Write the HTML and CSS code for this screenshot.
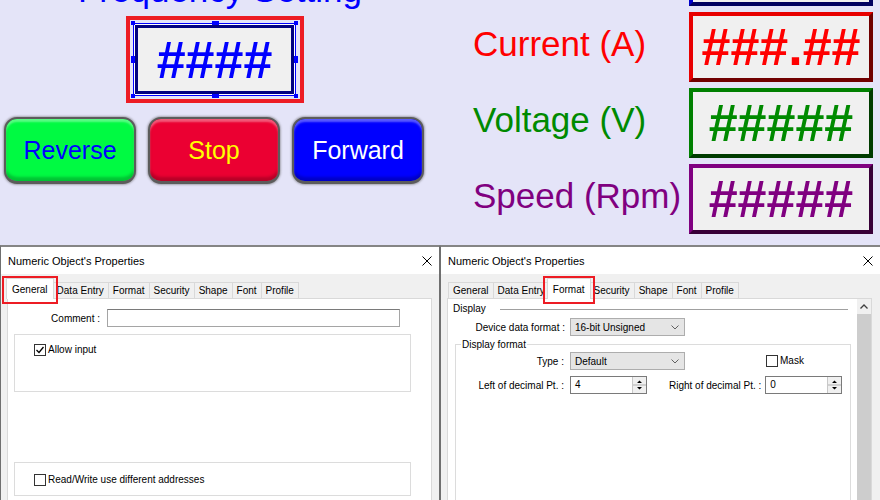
FILE: index.html
```html
<!DOCTYPE html>
<html>
<head>
<meta charset="utf-8">
<title>Numeric Object's Properties</title>
<link rel="stylesheet" href="styles.css">
</head>
<body>

<!-- HMI screen in the editor -->
<div class="screen">
	<div class="screen-left">
		<div class="freq-title">Frequency Setting</div>
		<div class="sel-frame">
			<div class="num-field">####
				<span class="handle tl"></span>
				<span class="handle tm"></span>
				<span class="handle tr"></span>
				<span class="handle ml"></span>
				<span class="handle mr"></span>
				<span class="handle bl"></span>
				<span class="handle bm"></span>
				<span class="handle br"></span>
			</div>
		</div>
		<div class="btn-row">
			<div class="hmi-btn btn-reverse">Reverse</div>
			<div class="hmi-btn btn-stop">Stop</div>
			<div class="hmi-btn btn-forward">Forward</div>
		</div>
	</div>

	<div class="screen-right">
		<div class="meter-row">
			<span class="meter-label"></span>
			<div class="meter meter-blue"></div>
		</div>
		<div class="meter-row">
			<span class="meter-label txt-red">Current (A)</span>
			<div class="meter meter-red">###.##</div>
		</div>
		<div class="meter-row">
			<span class="meter-label txt-green">Voltage (V)</span>
			<div class="meter meter-green">#####</div>
		</div>
		<div class="meter-row">
			<span class="meter-label txt-purple">Speed (Rpm)</span>
			<div class="meter meter-purple">#####</div>
		</div>
	</div>
</div>

<!-- property dialogs -->
<div class="dialogs">

	<div class="dialog">
		<div class="dlg-title">
			<span>Numeric Object's Properties</span>
			<svg class="dlg-close" width="10" height="10" viewBox="0 0 10 10"><path d="M0.5 0.5L9.5 9.5M9.5 0.5L0.5 9.5" stroke="#000" stroke-width="1"/></svg>
		</div>
		<div class="tabs">
			<div class="tab active">General<span class="tab-mark"></span></div>
			<div class="tab">Data Entry</div>
			<div class="tab">Format</div>
			<div class="tab">Security</div>
			<div class="tab">Shape</div>
			<div class="tab">Font</div>
			<div class="tab">Profile</div>
		</div>
		<div class="tab-page">
			<div class="field-row comment-row">
				<span class="lbl lbl-comment">Comment :</span>
				<div class="textbox comment-box"></div>
			</div>
			<div class="group group-input">
				<div class="check">
					<span class="cbox"><svg width="10" height="10" viewBox="0 0 10 10"><path d="M1.5 5L4 7.5L8.5 2" fill="none" stroke="#000" stroke-width="1.3"/></svg></span>
					Allow input
				</div>
			</div>
			<div class="group group-addr">
				<div class="check"><span class="cbox"></span>Read/Write use different addresses</div>
			</div>
		</div>
	</div>

	<div class="dialog dialog-right">
		<div class="dlg-title">
			<span>Numeric Object's Properties</span>
			<svg class="dlg-close" width="10" height="10" viewBox="0 0 10 10"><path d="M0.5 0.5L9.5 9.5M9.5 0.5L0.5 9.5" stroke="#000" stroke-width="1"/></svg>
		</div>
		<div class="tabs">
			<div class="tab">General</div>
			<div class="tab">Data Entry</div>
			<div class="tab active">Format<span class="tab-mark"></span></div>
			<div class="tab">Security</div>
			<div class="tab">Shape</div>
			<div class="tab">Font</div>
			<div class="tab">Profile</div>
		</div>
		<div class="tab-page scroll-page">
			<div class="page-content">
				<div class="sep-row">
					<span class="sep-title">Display</span>
					<span class="sep-line"></span>
				</div>
				<div class="field-row device-row">
					<span class="lbl lbl-device">Device data format :</span>
					<div class="select">16-bit Unsigned
						<svg width="8" height="5" viewBox="0 0 8 5"><path d="M0.5 0.5L4 4L7.5 0.5" fill="none" stroke="#606060" stroke-width="1"/></svg>
					</div>
				</div>
				<div class="group group-format">
					<div class="legend">Display format</div>
					<div class="field-row type-row">
						<span class="lbl lbl-fmt">Type :</span>
						<div class="select">Default
							<svg width="8" height="5" viewBox="0 0 8 5"><path d="M0.5 0.5L4 4L7.5 0.5" fill="none" stroke="#606060" stroke-width="1"/></svg>
						</div>
						<div class="check mask-check"><span class="cbox"></span>Mask</div>
					</div>
					<div class="field-row decimal-row">
						<span class="lbl lbl-fmt">Left of decimal Pt. :</span>
						<div class="spin">
							<span class="spin-val">4</span>
							<span class="spin-btns"><svg width="13" height="16" viewBox="0 0 13 16"><path d="M4 6L6.5 3.5L9 6Z M4 10L6.5 12.5L9 10Z" fill="#000"/><path d="M0 8H13" stroke="#b0b0b0" stroke-width="1"/></svg></span>
						</div>
						<span class="lbl lbl-right">Right of decimal Pt. :</span>
						<div class="spin">
							<span class="spin-val">0</span>
							<span class="spin-btns"><svg width="13" height="16" viewBox="0 0 13 16"><path d="M4 6L6.5 3.5L9 6Z M4 10L6.5 12.5L9 10Z" fill="#000"/><path d="M0 8H13" stroke="#b0b0b0" stroke-width="1"/></svg></span>
						</div>
					</div>
				</div>
			</div>
			<div class="vscroll">
				<div class="vscroll-up"><svg width="8" height="5" viewBox="0 0 8 5"><path d="M0.5 4.5L4 1L7.5 4.5" fill="none" stroke="#404040" stroke-width="1.3"/></svg></div>
				<div class="vscroll-thumb"></div>
			</div>
		</div>
	</div>

</div>
</body>
</html>
```

FILE: styles.css
```css
body {
	margin: 0;
	width: 880px;
	height: 500px;
	overflow: hidden;
	font-family: "Liberation Sans", Arial, sans-serif;
}

/* ---- HMI screen ---- */
.screen {
	display: flex;
	height: 245px;
	background-color: #e4e4f8;
	overflow: hidden;
}
.screen-left {
	width: 440px;
	flex-shrink: 0;
}
.freq-title {
	margin-top: -28px;
	height: 36px;
	line-height: 36px;
	font-size: 35px;
	color: #0000ff;
	text-align: center;
}
.sel-frame {
	width: fit-content;
	margin: 8px 0 0 126px;
	padding: 3px 4px 3px 3px;
	border: 4px solid #ed1c24;
}
.num-field {
	position: relative;
	width: 163px;
	height: 73px;
	box-sizing: border-box;
	border: 1px solid #0000ff;
	box-shadow: inset 0 0 0 1px #ffffff, inset 0 0 0 4px #000080;
	background-color: #f0f0f0;
	display: flex;
	align-items: center;
	justify-content: center;
	font-size: 52px;
	font-weight: bold;
	color: #0000ff;
}
.handle {
	position: absolute;
	width: 4px;
	height: 4px;
	background-color: #0000ff;
}
.tl { left: -3px; top: -3px; }
.tr { right: -3px; top: -3px; }
.bl { left: -3px; bottom: -3px; }
.br { right: -3px; bottom: -3px; }
.tm { left: 78px; top: -3px; width: 7px; }
.bm { left: 78px; bottom: -3px; width: 7px; }
.ml { left: -3px; top: 32px; height: 7px; }
.mr { right: -3px; top: 32px; height: 7px; }

.btn-row {
	display: flex;
	gap: 12px;
	margin: 14px 0 0 4px;
}
.hmi-btn {
	width: 132px;
	height: 67px;
	box-sizing: border-box;
	border: 2px solid #5c5c5c;
	border-bottom-width: 3px;
	border-radius: 13px;
	display: flex;
	align-items: center;
	justify-content: center;
	font-size: 25px;
	box-shadow: 0 0 2px 1px rgba(90, 90, 90, 0.45),
		inset 0 3px 2px rgba(255, 255, 255, 0.35),
		inset 0 -4px 3px rgba(0, 0, 0, 0.22);
}
.btn-reverse { background-color: #00fa42; color: #0000ff; }
.btn-stop { background-color: #eb0032; color: #ffff00; }
.btn-forward { background-color: #0000ff; color: #ffffff; }

.screen-right {
	width: 440px;
	flex-shrink: 0;
	box-sizing: border-box;
	padding-left: 33px;
	margin-top: -64px;
	display: flex;
	flex-direction: column;
	gap: 6px;
}
.meter-row {
	display: flex;
	align-items: center;
	height: 70px;
}
.meter-label {
	width: 216px;
	font-size: 35px;
	padding-bottom: 7px;
}
.txt-red { color: #ff0000; }
.txt-green { color: #008a00; }
.txt-purple { color: #800080; }
.meter {
	width: 184px;
	height: 70px;
	box-sizing: border-box;
	border: 4px solid;
	background-color: #f0f0f0;
	display: flex;
	align-items: center;
	justify-content: center;
	font-size: 52px;
	font-weight: bold;
}
.meter-blue { border-color: #0000cc #000060 #000060 #0000cc; }
.meter-red { border-color: #e80000 #700000 #700000 #e80000; color: #ff0000; }
.meter-green { border-color: #008000 #003c00 #003c00 #008000; color: #008a00; }
.meter-purple { border-color: #800080 #380038 #380038 #800080; color: #800080; }

/* ---- property dialogs ---- */
.dialogs {
	display: flex;
	height: 255px;
	overflow: hidden;
	font-size: 10px;
	color: #000;
}
.dialog {
	width: 440px;
	flex-shrink: 0;
	box-sizing: border-box;
	border: 1px solid #6f6f6f;
	border-top: 2px solid #858585;
	border-bottom: none;
	background-color: #f0f0f0;
}
.dialog-right {
	border-right: none;
}
.dlg-title {
	height: 27px;
	background-color: #ffffff;
	display: flex;
	align-items: center;
	justify-content: space-between;
	padding: 0 7px;
	font-size: 11px;
}

.tabs {
	display: flex;
	align-items: flex-start;
	height: 17px;
	margin: 8px 0 -1px 7px;
}
.tab {
	height: 16px;
	line-height: 15px;
	box-sizing: border-box;
	padding: 0 4px;
	margin-right: -1px;
	border: 1px solid #d9d9d9;
	border-bottom: none;
	background-color: #f0f0f0;
	white-space: nowrap;
}
.tab.active {
	position: relative;
	z-index: 2;
	height: 21px;
	margin: -4px -2px 0 -2px;
	padding: 3px 5px 0;
	background-color: #ffffff;
}
.tab-mark {
	position: absolute;
	left: -5px;
	right: -5px;
	top: -3px;
	bottom: -5px;
	border: 2px solid #ed1c24;
}

.tab-page {
	margin-left: 6px;
	width: 425px;
	height: 203px;
	box-sizing: border-box;
	border: 1px solid #d9d9d9;
	border-bottom: none;
	background-color: #ffffff;
}

.field-row {
	display: flex;
	align-items: center;
}
.lbl {
	text-align: right;
	white-space: nowrap;
}
.comment-row {
	margin-top: 10px;
}
.lbl-comment {
	width: 92px;
	margin-right: 7px;
}
.textbox {
	height: 18px;
	box-sizing: border-box;
	border: 1px solid #a5a5a5;
	border-top-color: #7a7a7a;
	background-color: #fff;
}
.comment-box {
	width: 293px;
}

.group {
	box-sizing: border-box;
	border: 1px solid #dcdcdc;
	background-color: #fff;
}
.group-input {
	margin: 7px 0 0 6px;
	width: 397px;
	height: 58px;
	padding: 9px 0 0 19px;
}
.group-addr {
	margin: 70px 0 0 6px;
	width: 397px;
	height: 34px;
	padding: 11px 0 0 19px;
}
.check {
	display: flex;
	align-items: center;
	line-height: 12px;
	white-space: nowrap;
}
.cbox {
	width: 12px;
	height: 12px;
	box-sizing: border-box;
	border: 1px solid #333;
	background-color: #fff;
	margin-right: 2px;
	display: flex;
	align-items: center;
	justify-content: center;
}

/* format tab */
.scroll-page {
	display: flex;
}
.page-content {
	flex: 1;
}
.vscroll {
	width: 14px;
	display: flex;
	flex-direction: column;
	background-color: #f0f0f0;
}
.vscroll-up {
	height: 15px;
	display: flex;
	align-items: center;
	justify-content: center;
}
.vscroll-thumb {
	flex: 1;
	background-color: #cdcdcd;
}
.sep-row {
	display: flex;
	align-items: center;
	height: 14px;
	line-height: 14px;
	margin-top: 3px;
}
.sep-title {
	margin-left: 5px;
}
.sep-line {
	flex: 1;
	margin: 0 9px 0 14px;
	border-top: 1px solid #a0a0a0;
}
.device-row {
	margin-top: 2px;
}
.lbl-device {
	width: 117px;
	margin-right: 5px;
}
.select {
	width: 115px;
	height: 18px;
	box-sizing: border-box;
	padding: 0 5px 0 4px;
	border: 1px solid #adadad;
	background-color: #e5e5e5;
	display: flex;
	align-items: center;
	justify-content: space-between;
}
.group-format {
	margin: 8px 0 0 7px;
	width: 396px;
	height: 170px;
	border-bottom: none;
}
.legend {
	width: fit-content;
	margin: -6px 0 0 5px;
	padding: 0 1px;
	line-height: 12px;
	background-color: #fff;
}
.type-row {
	margin-top: 1px;
}
.lbl-fmt {
	width: 108px;
	margin-right: 6px;
}
.mask-check {
	margin-left: 81px;
}
.decimal-row {
	margin-top: 6px;
}
.lbl-right {
	margin: 0 4px 0 22px;
}
.spin {
	width: 77px;
	height: 18px;
	box-sizing: border-box;
	border: 1px solid #7a7a7a;
	background-color: #fff;
	display: flex;
}
.spin-val {
	flex: 1;
	padding-left: 4px;
	line-height: 16px;
}
.spin-btns {
	width: 13px;
	border-left: 1px solid #c8c8c8;
	background-color: #f0f0f0;
	display: flex;
}
```
